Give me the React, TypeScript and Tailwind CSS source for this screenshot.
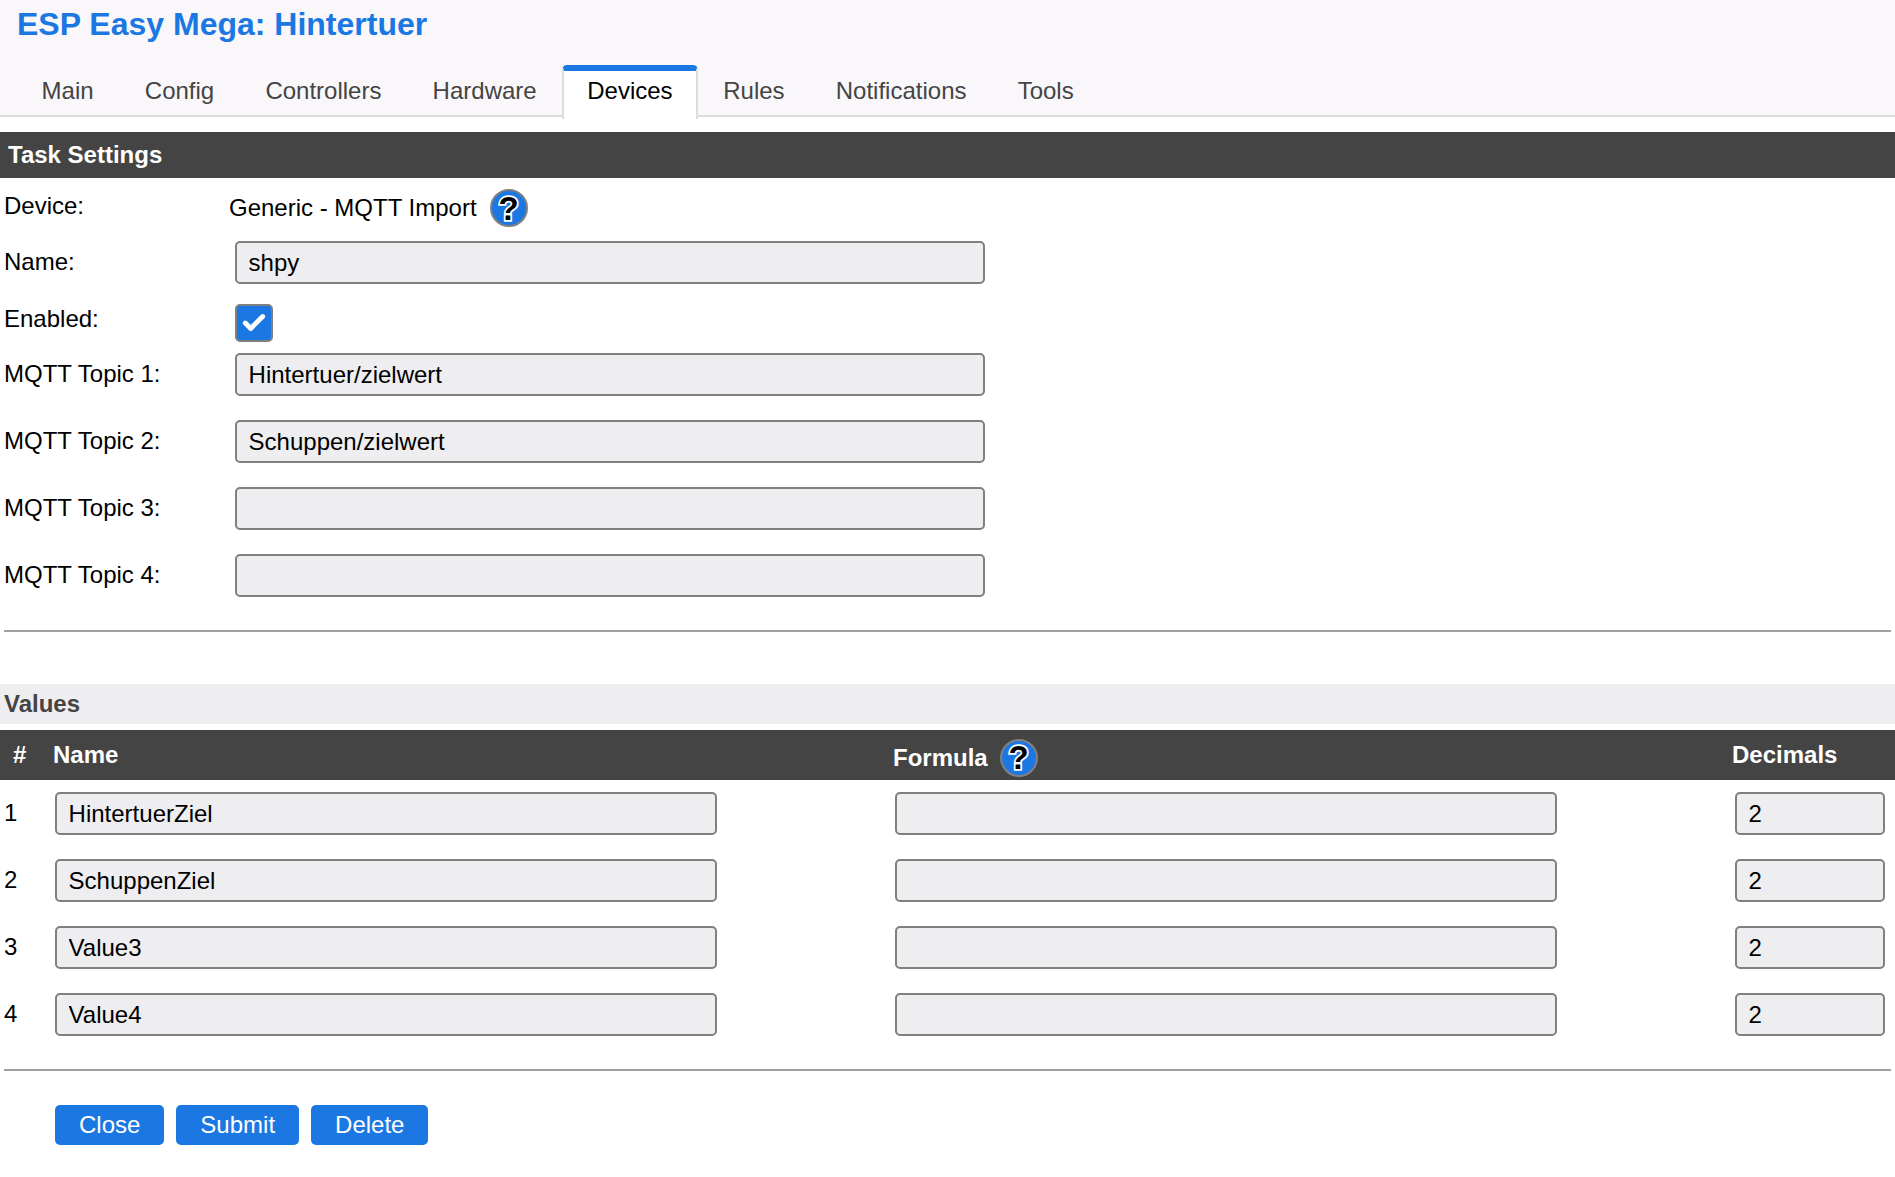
import { Check } from 'lucide-react';

const TABS = ['Main', 'Config', 'Controllers', 'Hardware', 'Devices', 'Rules', 'Notifications', 'Tools'];
const TOPICS = [
  ['MQTT Topic 1:', 'Hintertuer/zielwert'],
  ['MQTT Topic 2:', 'Schuppen/zielwert'],
  ['MQTT Topic 3:', ''],
  ['MQTT Topic 4:', ''],
];
const VALUES = ['HintertuerZiel', 'SchuppenZiel', 'Value3', 'Value4'];

function Field({ value, className }: { value: string; className: string }) {
  return (
    <input
      readOnly
      value={value}
      className={`h-[43px] rounded-[5px] border-[2.4px] border-[#808080] bg-[#eeedef] px-[11.6px] text-[24px] text-black outline-none ${className}`}
    />
  );
}

function Help() {
  return (
    <span className="flex h-[38px] w-[38px] items-center justify-center rounded-full border-[2.4px] border-[#808080] bg-[#1b78e2] text-[33px] font-bold leading-none text-black [-webkit-text-stroke:3.5px_white] [paint-order:stroke_fill]">
      ?
    </span>
  );
}

function Row({ label, h, labelClass = '', children }: { label: string; h: string; labelClass?: string; children: React.ReactNode }) {
  return (
    <div className={`flex items-start ${h}`}>
      <div className={`h-[43px] w-[235px] pl-[4px] leading-[43px] ${labelClass}`}>{label}</div>
      {children}
    </div>
  );
}

function Divider({ className }: { className: string }) {
  return <div className={`ml-[4px] mr-[4px] border-t-2 border-[#a0a0a0] ${className}`} />;
}

export default function App() {
  return (
    <div className="min-h-[1177px] bg-white font-['Liberation_Sans',Arial,sans-serif] text-[24px] text-black">
      <header className="h-[117px] border-b-2 border-[#dddddd] bg-[#f9f7fa]">
        <h1 className="pl-[17px] pt-[3px] text-[32px] font-bold leading-[42px] text-[#1b78e2]">ESP Easy Mega: Hintertuer</h1>
        <nav className="mt-[20px] flex pl-[16px]">
          {TABS.map((tab) =>
            tab === 'Devices' ? (
              <a
                key={tab}
                className="-mb-[2px] h-[54px] rounded-t-[5px] border-x-2 border-t-[6px] border-[#dddddd] border-t-[#1b78e2] bg-white px-[23px] leading-[40px] text-black"
              >
                {tab}
              </a>
            ) : (
              <a key={tab} className="h-[52px] px-[25.6px] pt-[6px] leading-[40px] text-[#444444]">
                {tab}
              </a>
            )
          )}
        </nav>
      </header>

      <h2 className="mt-[15px] h-[46px] bg-[#444444] pl-[8px] text-[24px] font-bold leading-[46px] text-white">Task Settings</h2>

      <Row label="Device:" h="h-[63px]" labelClass="mt-[6px]">
        <div className="mt-[6px] flex h-[48px] items-center">
          <span className="-ml-[6px] mr-[13px]">Generic - MQTT Import</span>
          <Help />
        </div>
      </Row>
      <Row label="Name:" h="h-[63px]" labelClass="-mt-[1px]">
        <Field value="shpy" className="w-[750px]" />
      </Row>
      <Row label="Enabled:" h="h-[49px]" labelClass="-mt-[7px]">
        <span className="flex h-[38px] w-[38px] items-center justify-center rounded-[5px] border-[2.4px] border-[#808080] bg-[#1b78e2]">
          <Check className="h-[26px] w-[26px] text-white" strokeWidth={4.5} />
        </span>
      </Row>
      {TOPICS.map(([label, value]) => (
        <Row key={label} label={label} h="h-[67px]" labelClass="-mt-[1px]">
          <Field value={value} className="w-[750px]" />
        </Row>
      ))}

      <Divider className="mt-[9px]" />

      <h3 className="mt-[52px] h-[40px] bg-[#eeedef] pl-[4px] text-[24px] font-bold leading-[40px] text-[#444444]">Values</h3>

      <div className="mt-[6px] flex h-[50px] items-center bg-[#444444] font-bold text-white">
        <span className="w-[53px] pl-[13px]">#</span>
        <span className="w-[840px]">Name</span>
        <span className="mt-[5px] flex w-[839px] items-center">
          Formula
          <span className="ml-[12px] font-normal">
            <Help />
          </span>
        </span>
        <span>Decimals</span>
      </div>

      <div className="mt-[12px]">
        {VALUES.map((name, i) => (
          <div key={name} className="flex h-[67px] items-start">
            <div className="-mt-[1px] h-[43px] w-[55px] pl-[4px] leading-[43px]">{i + 1}</div>
            <Field value={name} className="w-[662px]" />
            <Field value="" className="ml-[178px] w-[662px]" />
            <Field value="2" className="ml-[178px] w-[150px]" />
          </div>
        ))}
      </div>

      <Divider className="mt-[9px]" />

      <div className="mt-[34px] flex gap-[12px] pl-[55px]">
        {['Close', 'Submit', 'Delete'].map((label) => (
          <button key={label} className="h-[40px] rounded-[5px] bg-[#1b78e2] px-[24px] text-[24px] text-white">
            {label}
          </button>
        ))}
      </div>
    </div>
  );
}
